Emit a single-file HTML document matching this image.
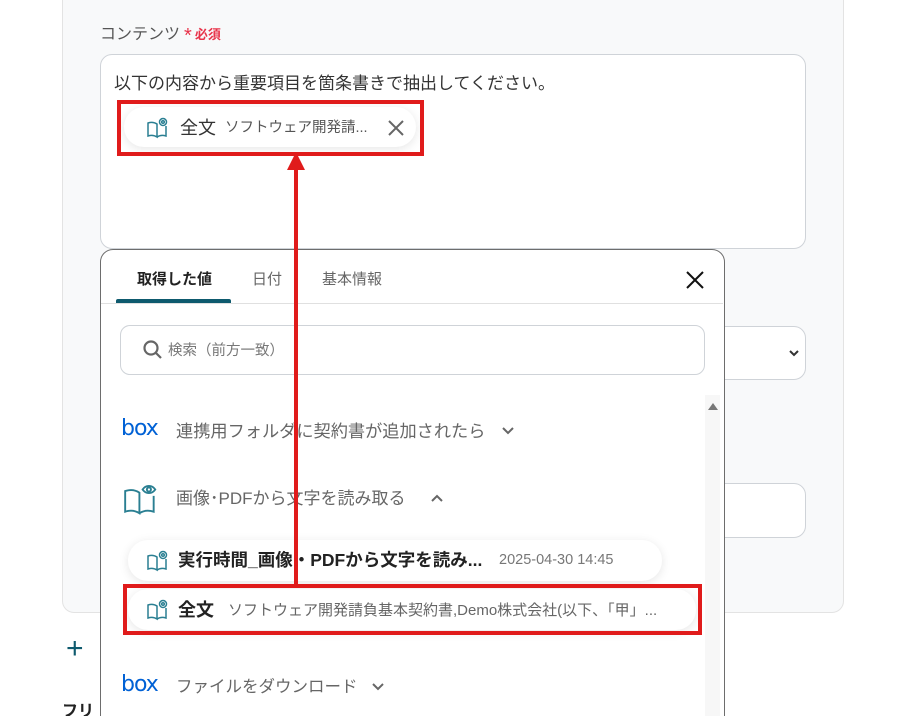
<!DOCTYPE html>
<html><head><meta charset="utf-8"><style>
*{box-sizing:border-box;margin:0;padding:0}
html,body{width:909px;height:716px;overflow:hidden}
body{background:#fff;position:relative;font-family:"Liberation Sans","Noto Sans CJK JP",sans-serif;color:#333}
.abs{position:absolute}
.card{left:62px;top:-20px;width:782px;height:633px;background:#f8f9fa;border:1px solid #e3e3e3;border-radius:12px}
.ta{left:100px;top:54px;width:706px;height:195px;background:#fff;border:1px solid #cfd3d8;border-radius:12px}
.pill{background:#fff;border-radius:20px;box-shadow:0 2px 10px rgba(0,0,0,.10);display:flex;align-items:center}
.red{border:4px solid #e01b1b}
.pop{left:100px;top:249px;width:625px;height:480px;background:#fff;border:1px solid #6d6d6d;border-radius:13px 13px 0 0}
.t{white-space:nowrap;line-height:1}
.box{font-family:"DejaVu Sans",sans-serif;font-size:22px;color:#0061d5;letter-spacing:-1px}
</style></head><body>
<div class="abs card"></div>
<div class="abs t" style="left:100px;top:23px;font-size:16px;color:#555">コンテンツ<span style="color:#e8334a;font-size:20px;margin-left:4px;position:relative;top:3px">*</span><span style="color:#e8334a;font-size:13px;margin-left:3px;font-weight:bold">必須</span></div>
<div class="abs ta"></div>
<div class="abs t" style="left:114px;top:75px;font-size:17px;color:#333">以下の内容から重要項目を箇条書きで抽出してください。</div>
<div class="abs pill" style="left:124px;top:107px;width:292px;height:40px"></div>
<svg class="abs" style="left:146px;top:116px" width="24" height="24" viewBox="0 0 24 24" fill="none" stroke="#2a7f92" stroke-width="1.5"><path d="M2 7v13c3-1 6-1 9 1V8C8 6 5 6 2 7z"/><path d="M11 21c3-2 6-2 9-1V10"/><circle cx="17" cy="6" r="3.5"/><circle cx="17" cy="6" r="1.3"/></svg>
<div class="abs t" style="left:180px;top:119px;font-size:18px;color:#333">全文</div>
<div class="abs t" style="left:225px;top:121px;font-size:14.5px;color:#555">ソフトウェア開発請...</div>
<svg class="abs" style="left:387px;top:119px" width="18" height="18" viewBox="0 0 18 18" stroke="#666" stroke-width="2"><path d="M2 2L16 16M16 2L2 16"/></svg>
<div class="abs red" style="left:117px;top:100px;width:307px;height:56px"></div>

<div class="abs" style="left:690px;top:326px;width:116px;height:54px;background:#fff;border:1px solid #cfd3d8;border-radius:12px"></div>
<svg class="abs" style="left:788px;top:348px" width="12" height="10" viewBox="0 0 12 10" fill="none" stroke="#333" stroke-width="2"><path d="M2 3l4 4 4-4"/></svg>
<div class="abs" style="left:690px;top:483px;width:116px;height:55px;background:#fff;border:1px solid #cfd3d8;border-radius:12px"></div>

<div class="abs t" style="left:66px;top:634px;font-size:30px;color:#0e5a6e;font-weight:300">+</div>
<div class="abs t" style="left:62px;top:704px;font-size:16px;font-weight:bold;color:#222">フリ</div>

<div class="abs pop"></div>
<div class="abs t" style="left:137px;top:272px;font-size:15px;font-weight:bold;color:#222">取得した値</div>
<div class="abs t" style="left:252px;top:272px;font-size:15px;color:#666">日付</div>
<div class="abs t" style="left:322px;top:272px;font-size:15px;color:#666">基本情報</div>
<div class="abs" style="left:101px;top:303px;width:622px;height:1px;background:#e0e0e0"></div>
<div class="abs" style="left:116px;top:299px;width:115px;height:4px;background:#0e5a6e;border-radius:2px 2px 0 0"></div>
<svg class="abs" style="left:684px;top:269px" width="22" height="22" viewBox="0 0 22 22" stroke="#111" stroke-width="2"><path d="M3 3L19 19M19 3L3 19"/></svg>
<div class="abs" style="left:120px;top:325px;width:585px;height:50px;border:1px solid #cfd3d8;border-radius:10px"></div>
<svg class="abs" style="left:142px;top:339px" width="22" height="22" viewBox="0 0 22 22" fill="none" stroke="#666" stroke-width="2.2"><circle cx="9" cy="9" r="6.5"/><path d="M14 14l5 5"/></svg>
<div class="abs t" style="left:168px;top:344px;font-size:14.5px;color:#777">検索（前方一致）</div>
<div class="abs" style="left:705px;top:395px;width:15px;height:330px;background:#f7f7f7"></div>
<div class="abs" style="left:708px;top:403px;width:0;height:0;border-left:5px solid transparent;border-right:5px solid transparent;border-bottom:7px solid #777"></div>

<div class="abs t box" style="left:121px;top:418px">box</div>
<div class="abs t" style="left:176px;top:423px;font-size:17.2px;color:#666">連携用フォルダに契約書が追加されたら</div>
<svg class="abs" style="left:501px;top:426px" width="14" height="10" viewBox="0 0 14 10" fill="none" stroke="#666" stroke-width="2"><path d="M2 2l5 5 5-5"/></svg>
<svg class="abs" style="left:122px;top:480px" width="38" height="38" viewBox="0 0 24 24" fill="none" stroke="#2a7f92" stroke-width="1.2"><path d="M2 7v13c3-1 6-1 9 1V8C8 6 5 6 2 7z"/><path d="M11 21c3-2 6-2 9-1V10"/><path d="M13 6c2-3 6-3 8 0c-2 3-6 3-8 0z"/><circle cx="17" cy="6" r="1.3"/></svg>
<div class="abs t" style="left:176px;top:490px;font-size:17px;color:#666">画像･PDFから文字を読み取る</div>
<svg class="abs" style="left:430px;top:493px" width="14" height="10" viewBox="0 0 14 10" fill="none" stroke="#666" stroke-width="2"><path d="M2 8l5-5 5 5"/></svg>

<div class="abs pill" style="left:128px;top:540px;width:534px;height:41px"></div>
<svg class="abs" style="left:146px;top:549px" width="24" height="24" viewBox="0 0 24 24" fill="none" stroke="#2a7f92" stroke-width="1.5"><path d="M2 7v13c3-1 6-1 9 1V8C8 6 5 6 2 7z"/><path d="M11 21c3-2 6-2 9-1V10"/><circle cx="17" cy="6" r="3.5"/><circle cx="17" cy="6" r="1.3"/></svg>
<div class="abs t" style="left:178px;top:552px;font-size:17.5px;font-weight:bold;color:#222">実行時間_画像・PDFから文字を読み...</div>
<div class="abs t" style="left:499px;top:553px;font-size:14.5px;color:#777">2025-04-30 14:45</div>

<div class="abs pill" style="left:128px;top:589px;width:568px;height:41px"></div>
<svg class="abs" style="left:146px;top:598px" width="24" height="24" viewBox="0 0 24 24" fill="none" stroke="#2a7f92" stroke-width="1.5"><path d="M2 7v13c3-1 6-1 9 1V8C8 6 5 6 2 7z"/><path d="M11 21c3-2 6-2 9-1V10"/><circle cx="17" cy="6" r="3.5"/><circle cx="17" cy="6" r="1.3"/></svg>
<div class="abs t" style="left:178px;top:601px;font-size:18px;font-weight:bold;color:#222">全文</div>
<div class="abs t" style="left:228px;top:603px;font-size:15px;color:#666">ソフトウェア開発請負基本契約書,Demo株式会社(以下、「甲」...</div>
<div class="abs red" style="left:123px;top:584px;width:579px;height:51px"></div>

<div class="abs t box" style="left:121px;top:674px">box</div>
<div class="abs t" style="left:176px;top:679px;font-size:16.5px;color:#666">ファイルをダウンロード</div>
<svg class="abs" style="left:371px;top:682px" width="14" height="10" viewBox="0 0 14 10" fill="none" stroke="#666" stroke-width="2"><path d="M2 2l5 5 5-5"/></svg>

<div class="abs" style="left:294px;top:168px;width:4px;height:418px;background:#e01b1b"></div>
<div class="abs" style="left:287px;top:152px;width:0;height:0;border-left:9px solid transparent;border-right:9px solid transparent;border-bottom:18px solid #e01b1b"></div>
</body></html>
